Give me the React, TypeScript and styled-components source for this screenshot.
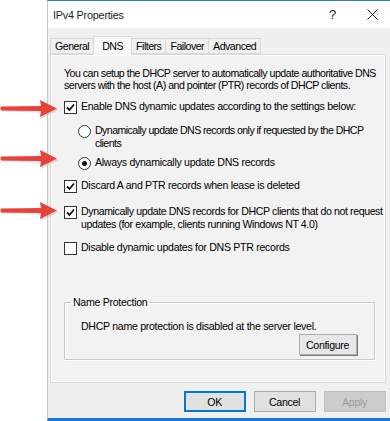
import React from "react";
import styled, { createGlobalStyle } from "styled-components";

const GlobalStyle = createGlobalStyle`
  html, body {
    margin: 0;
    padding: 0;
    background: #ffffff;
  }
  body {
    font-family: "Liberation Sans", Arial, sans-serif;
    font-size: 10.6px;
    letter-spacing: -0.3px;
    color: #000;
  }
`;

const Page = styled.div`
  position: relative;
  display: flex;
  width: 390px;
  height: 421px;
  overflow: hidden;
`;

const Gutter = styled.div`
  width: 47px;
  flex-shrink: 0;
  background: #fff;
`;

const Dialog = styled.div`
  flex: 1;
  display: flex;
  flex-direction: column;
  background: #f0f0f0;
  border-top: 1px solid #2b7bd0;
  border-bottom: 3px solid #1a78d2;
  border-left: 1px solid #c8c8c8;
`;

const TitleBar = styled.div`
  height: 27px;
  display: flex;
  align-items: center;
  background: #fff;
  padding-left: 5px;
  font-size: 10.8px;
  letter-spacing: -0.2px;
  color: #222;
  .title {
    flex: 1;
  }
  .ctl {
    width: 40px;
    display: flex;
    justify-content: center;
    font-size: 13px;
    color: #222;
  }
`;

const Body = styled.div`
  flex: 1;
  display: flex;
  flex-direction: column;
  padding: 8px 7px 0 2px;
`;

const TabStrip = styled.div`
  display: flex;
  align-items: flex-end;
  height: 18px;
  padding-left: 1px;
  position: relative;
  z-index: 1;
`;

const Tab = styled.div<{ $active?: boolean }>`
  height: ${(p) => (p.$active ? "19px" : "16px")};
  display: flex;
  align-items: center;
  padding: 0 ${(p) => (p.$active ? "8px" : "4px")};
  margin-bottom: ${(p) => (p.$active ? "-1px" : "0")};
  background: ${(p) => (p.$active ? "#f9f9f9" : "#f0f0f0")};
  border: 1px solid #d9d9d9;
  border-bottom: ${(p) => (p.$active ? "none" : "1px solid #d9d9d9")};
  margin-left: -1px;
  letter-spacing: -0.5px;
  box-sizing: border-box;
`;

const Panel = styled.div`
  height: 329px;
  box-sizing: border-box;
  background: #f2f2f2;
  border: 1px solid #d9d9d9;
  box-shadow: inset 0 0 0 1px #fff;
  padding: 12px 2px 0 13px;
  display: flex;
  flex-direction: column;
`;

const Para = styled.p`
  margin: 0 0 9px;
  line-height: 12px;
  white-space: nowrap;
  letter-spacing: -0.5px;
`;

const Option = styled.label<{ $indent?: boolean; $gap?: number; $track?: number }>`
  display: flex;
  align-items: flex-start;
  gap: 4px;
  line-height: 13px;
  white-space: nowrap;
  letter-spacing: ${(p) => p.$track ?? -0.3}px;
  margin-left: ${(p) => (p.$indent ? "14px" : "0")};
  margin-bottom: ${(p) => p.$gap ?? 10}px;
`;

const Box = styled.span`
  width: 11px;
  height: 11px;
  flex-shrink: 0;
  border: 1px solid #333;
  background: #fff;
  margin-top: 1px;
  display: flex;
  align-items: center;
  justify-content: center;
`;

const Radio = styled.span`
  width: 11px;
  height: 11px;
  flex-shrink: 0;
  border: 1px solid #333;
  border-radius: 50%;
  background: #fff;
  margin-top: 1px;
  display: flex;
  align-items: center;
  justify-content: center;
`;

const Dot = styled.span`
  width: 5px;
  height: 5px;
  border-radius: 50%;
  background: #111;
`;

const Spacer = styled.div`
  flex: 1;
`;

const Group = styled.fieldset`
  margin: 0 8px 22px 0;
  padding: 12px 17px 4px 16px;
  border: 1px solid #c8c8c8;
  box-shadow: 1px 1px 0 #fff, inset 1px 1px 0 #fff;
  border-radius: 1px;
  display: flex;
  flex-direction: column;
  legend {
    padding: 0 2px;
    margin-left: -10px;
  }
  p {
    margin: 0 0 2px;
  }
`;

const Button = styled.button<{ $default?: boolean; $disabled?: boolean }>`
  width: 62px;
  height: 21px;
  box-sizing: border-box;
  font-family: "Liberation Sans", Arial, sans-serif;
  font-size: 10.6px;
  letter-spacing: -0.3px;
  color: ${(p) => (p.$disabled ? "#9a9a9a" : "#000")};
  background: ${(p) => (p.$disabled ? "#cccccc" : "#e1e1e1")};
  border: 1px solid ${(p) => (p.$default ? "#0078d7" : p.$disabled ? "#bfbfbf" : "#adadad")};
  box-shadow: ${(p) => (p.$default ? "inset 0 0 0 1px #0078d7" : "none")};
  padding: 0;
`;

const ConfigureButton = styled(Button)`
  width: 58px;
  height: 21px;
  align-self: flex-end;
  box-shadow: 1px 1px 0 #7a7a7a;
  border: 1px solid #adadad;
  background: #e7e7e7;
`;

const Footer = styled.div`
  display: flex;
  justify-content: flex-end;
  gap: 8px;
  padding-top: 8px;
`;

const ArrowMark = styled.svg<{ $top: number }>`
  position: absolute;
  left: 0;
  top: ${(p) => p.$top}px;
  width: 60px;
  height: 22px;
  overflow: visible;
`;

function Arrow({ top }: { top: number }) {
  return (
    <ArrowMark $top={top} viewBox="0 0 60 22">
      <path d="M1 9.5 L41 8.5 L40 2 L58 11 L40 20 L41 13.5 L1 12.5 Z" fill="#9a9a9a" opacity="0.35" transform="translate(0.5 1)" />
      <path d="M1 8.5 L41 8 L40 2 L57 10.5 L40 19 L41 13 L1 12.5 Q0 10.5 1 8.5 Z" fill="#e8433b" />
    </ArrowMark>
  );
}

function Check() {
  return (
    <svg width="9" height="9" viewBox="0 0 9 9">
      <path d="M1 4.5 L3.5 7 L8 1.5" stroke="#111" strokeWidth="1.8" fill="none" />
    </svg>
  );
}

function Close() {
  return (
    <svg width="11" height="11" viewBox="0 0 11 11">
      <path d="M0.5 0.5 L10.5 10.5 M10.5 0.5 L0.5 10.5" stroke="#222" strokeWidth="1" />
    </svg>
  );
}

function App() {
  return (
    <Page>
      <GlobalStyle />
      <Gutter />
      <Dialog>
        <TitleBar>
          <span className="title">IPv4 Properties</span>
          <span className="ctl">?</span>
          <span className="ctl">
            <Close />
          </span>
        </TitleBar>
        <Body>
          <TabStrip>
            <Tab>General</Tab>
            <Tab $active>DNS</Tab>
            <Tab>Filters</Tab>
            <Tab>Failover</Tab>
            <Tab>Advanced</Tab>
          </TabStrip>
          <Panel>
            <Para>
              You can setup the DHCP server to automatically update authoritative DNS
              <br />
              servers with the host (A) and pointer (PTR) records of DHCP clients.
            </Para>
            <Option>
              <Box>
                <Check />
              </Box>
              Enable DNS dynamic updates according to the settings below:
            </Option>
            <Option $indent $gap={6} $track={-0.55}>
              <Radio />
              <span>
                Dynamically update DNS records only if requested by the DHCP
                <br />
                clients
              </span>
            </Option>
            <Option $indent $gap={9}>
              <Radio>
                <Dot />
              </Radio>
              Always dynamically update DNS records
            </Option>
            <Option $gap={12}>
              <Box>
                <Check />
              </Box>
              Discard A and PTR records when lease is deleted
            </Option>
            <Option $gap={10} $track={-0.4}>
              <Box>
                <Check />
              </Box>
              <span>
                Dynamically update DNS records for DHCP clients that do not request
                <br />
                updates (for example, clients running Windows NT 4.0)
              </span>
            </Option>
            <Option>
              <Box />
              Disable dynamic updates for DNS PTR records
            </Option>
            <Spacer />
            <Group>
              <legend>Name Protection</legend>
              <p>DHCP name protection is disabled at the server level.</p>
              <ConfigureButton>Configure</ConfigureButton>
            </Group>
          </Panel>
          <Footer>
            <Button $default>OK</Button>
            <Button>Cancel</Button>
            <Button $disabled>Apply</Button>
          </Footer>
        </Body>
      </Dialog>
      <Arrow top={98} />
      <Arrow top={148} />
      <Arrow top={200} />
    </Page>
  );
}

export default App;
